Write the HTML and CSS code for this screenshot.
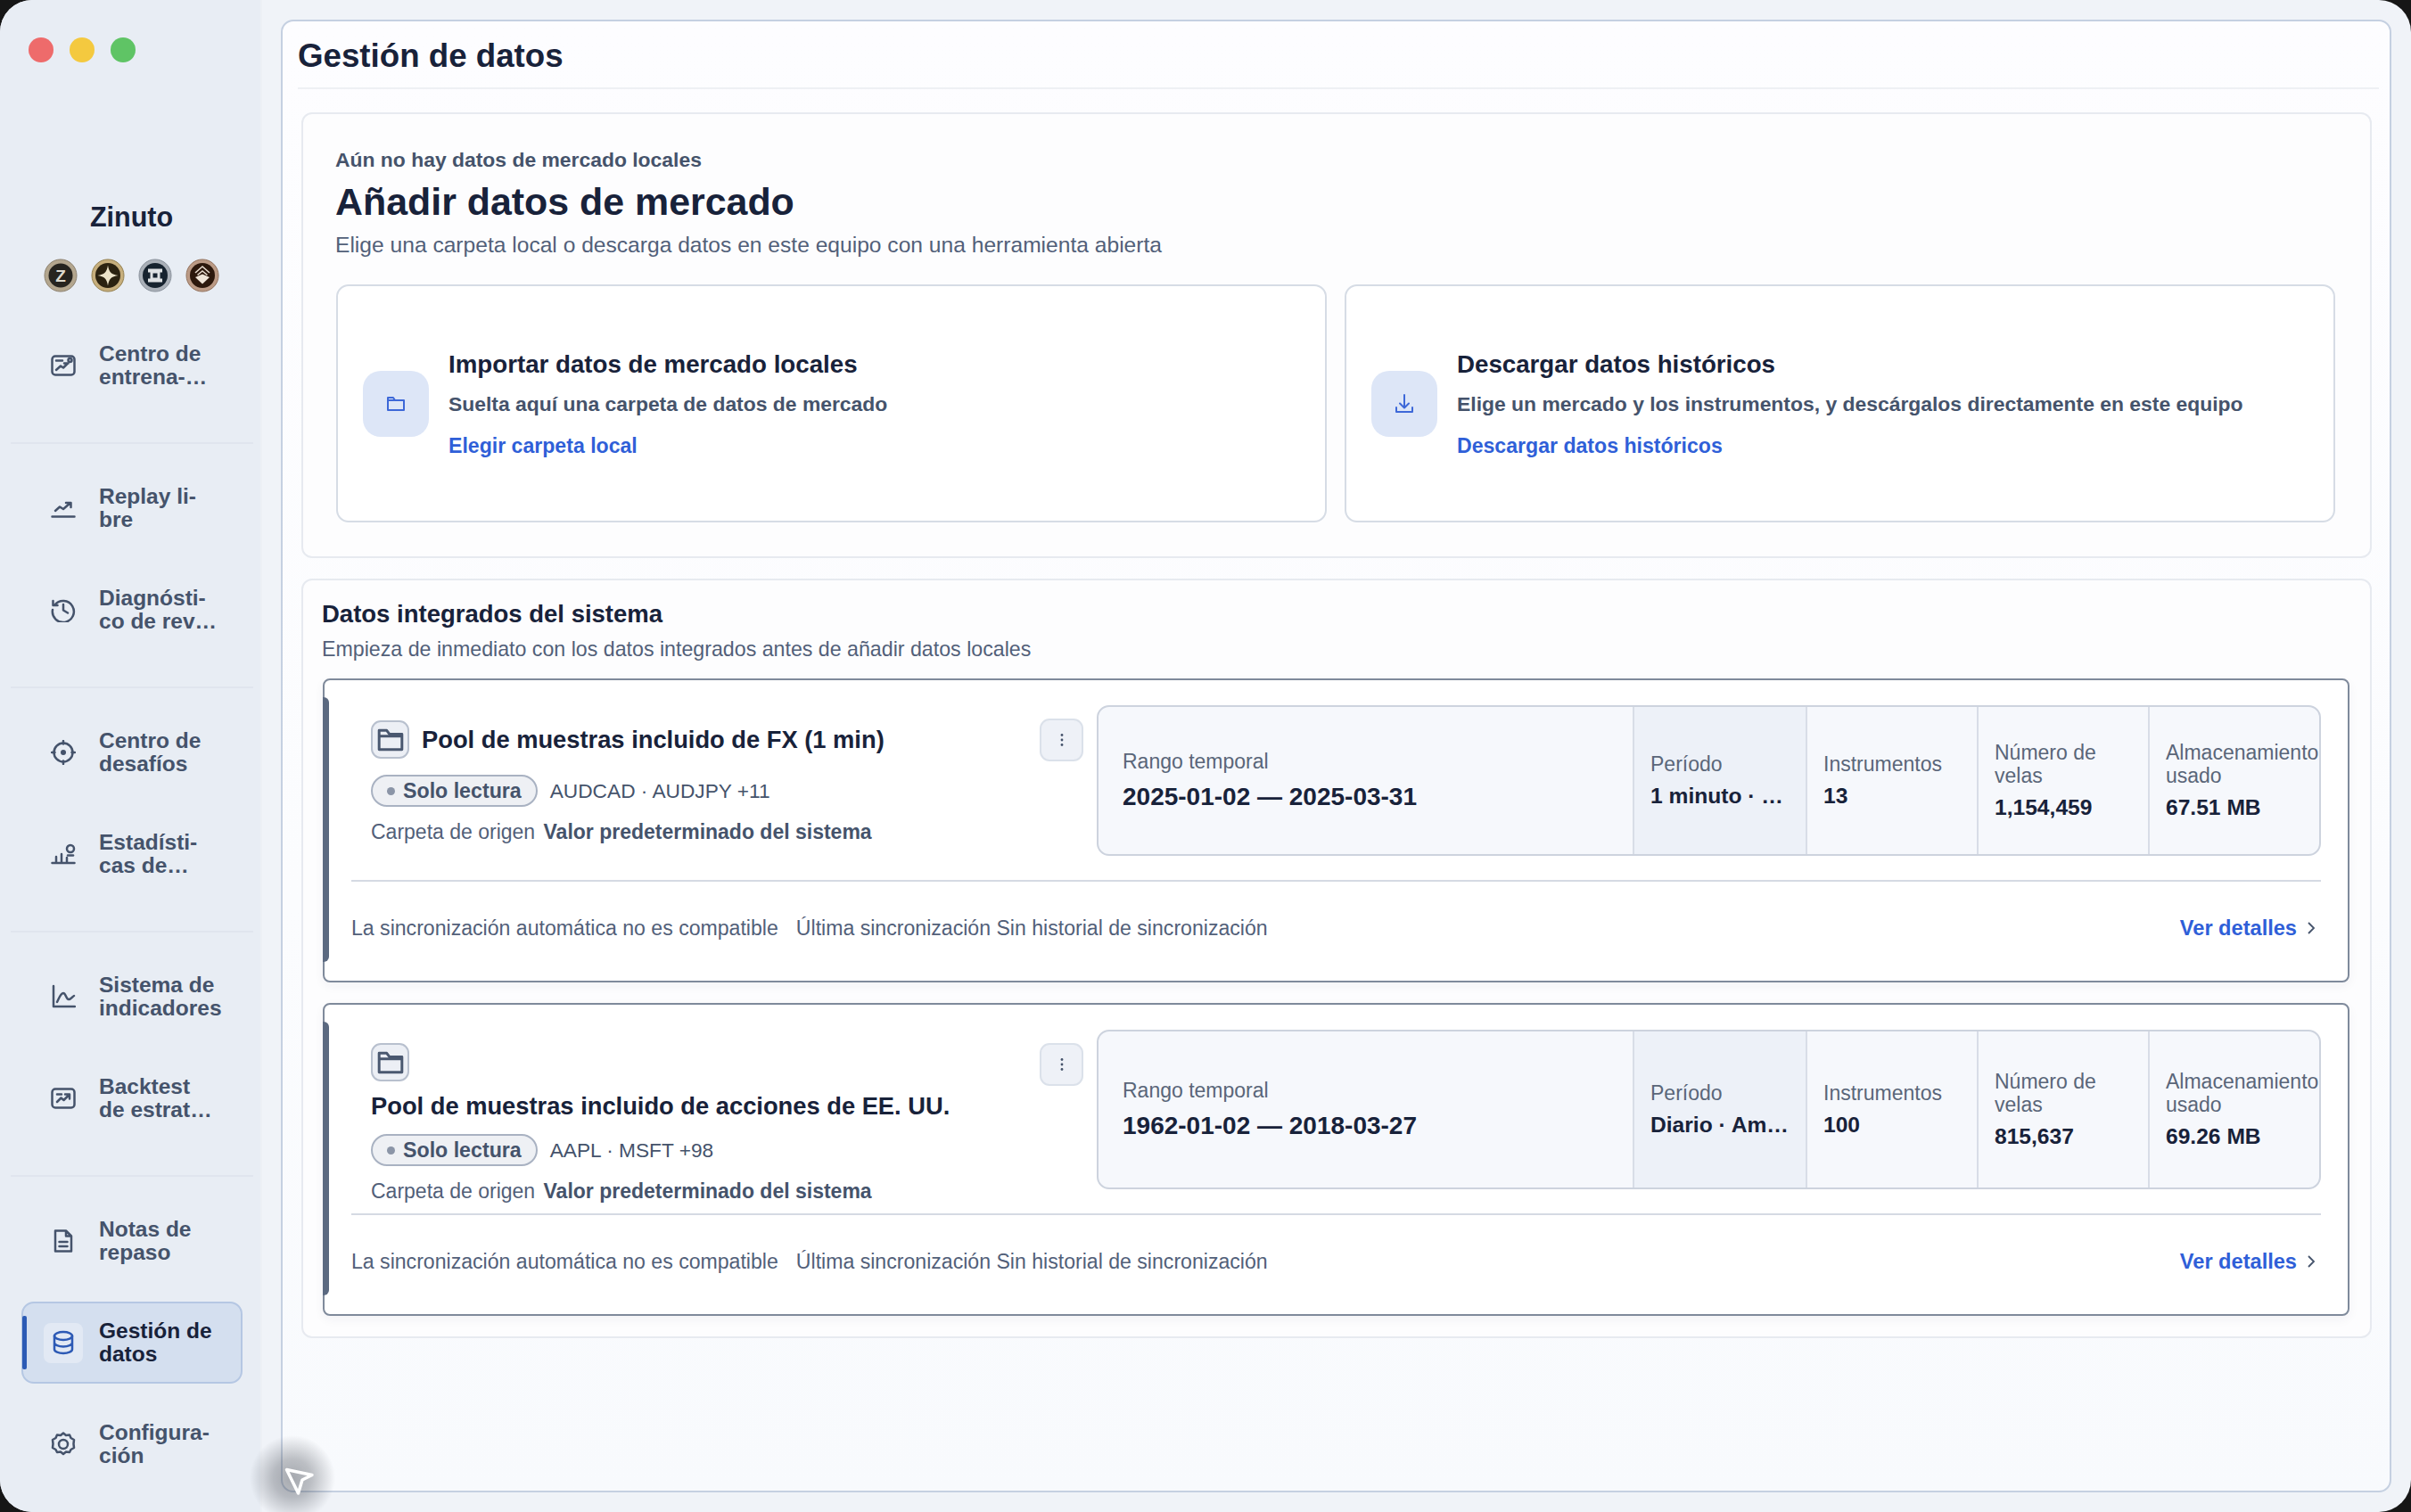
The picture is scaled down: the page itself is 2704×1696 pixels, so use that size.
FILE: index.html
```html
<!DOCTYPE html>
<html lang="es">
<head>
    <meta charset="UTF-8">
    <meta name="viewport" content="width=device-width, initial-scale=1.0">
    <title>Zinuto - Gestión de datos</title>
    <link rel="stylesheet" href="styles.css">
</head>
<body>
    <div class="window">
        <aside class="sidebar">
            <div class="traffic">
                <span class="light red"></span>
                <span class="light yellow"></span>
                <span class="light green"></span>
            </div>
            <div class="brand">Zinuto</div>
            <div class="coins">
                <svg class="coin" viewBox="0 0 38 38">
                    <circle cx="19" cy="19" r="18" fill="#b3a68e" stroke="#8d8270"/>
                    <circle cx="19" cy="19" r="13.5" fill="#26241f"/>
                    <text x="19" y="25.5" class="coin-letter">Z</text>
                </svg>
                <svg class="coin" viewBox="0 0 38 38">
                    <circle cx="19" cy="19" r="18" fill="#c6ae7c" stroke="#94804f"/>
                    <circle cx="19" cy="19" r="14" fill="#2b2210"/>
                    <path d="M19 7.5 C20 15 23 18 30.5 19 C23 20 20 23 19 30.5 C18 23 15 20 7.5 19 C15 18 18 15 19 7.5Z" fill="#ece3c9"/>
                </svg>
                <svg class="coin" viewBox="0 0 38 38">
                    <circle cx="19" cy="19" r="18" fill="#aab0b8" stroke="#8a929c"/>
                    <circle cx="19" cy="19" r="14" fill="#17232f"/>
                    <path d="M11 11.5h16v4h-2.500v7h2.500v4h-16v-4h2.500v-7h-2.500z" fill="#dfe2e4"/>
                    <rect x="16.500" y="16.500" width="5" height="5" fill="#17232f"/>
                </svg>
                <svg class="coin" viewBox="0 0 38 38">
                    <circle cx="19" cy="19" r="18" fill="#bb9a85" stroke="#94745f"/>
                    <circle cx="19" cy="19" r="14" fill="#2c180c"/>
                    <path d="M11 16 L19 9 L27 16 M13.500 18.500 L19 14 L24.500 18.500" fill="none" stroke="#e8dccf" stroke-width="1.600"/>
                    <path d="M11 21 L19 17.500 L27 21 L19 28.500z" fill="#efe5d8"/>
                </svg>
            </div>

            <div class="nav-group">
                <div class="nav-item">
                    <span class="nav-icon">
                        <svg viewBox="0 0 28 28"><rect x="1.500" y="3.500" width="25" height="21" rx="3.500"/><path d="M6 19l5-4.500 3 2 5-5M15 11.500h4.500M6 8.500h7"/><circle cx="21.500" cy="8" r="2"/></svg>
                    </span>
                    <span class="nav-label">Centro de<br>entrena-…</span>
                </div>
            </div>

            <div class="nav-group">
                <div class="nav-item">
                    <span class="nav-icon">
                        <svg viewBox="0 0 28 28"><path d="M1.500 23.500h25M5 17l5-4.500 4 2.500 8-7M17 8h5.500v5"/></svg>
                    </span>
                    <span class="nav-label">Replay li-<br>bre</span>
                </div>
                <div class="nav-item">
                    <span class="nav-icon">
                        <svg viewBox="0 0 28 28"><path d="M4.500 8.500A12 12 0 1 1 2 14M2.500 4v5h5M14 8v6.500l5 3"/></svg>
                    </span>
                    <span class="nav-label">Diagnósti-<br>co de rev…</span>
                </div>
            </div>

            <div class="nav-group">
                <div class="nav-item">
                    <span class="nav-icon">
                        <svg viewBox="0 0 28 28"><circle cx="14" cy="14" r="10.500"/><path d="M14 1v3.500M14 23.500V27M1 14h3.500M23.500 14H27"/><circle cx="14" cy="14" r="3" class="solid"/></svg>
                    </span>
                    <span class="nav-label">Centro de<br>desafíos</span>
                </div>
                <div class="nav-item">
                    <span class="nav-icon">
                        <svg viewBox="0 0 28 28"><path d="M1.500 24h25M6 24v-7M12 24v-10M18 24v-6"/><circle cx="22" cy="8" r="4"/><path d="M19 15.500h6"/></svg>
                    </span>
                    <span class="nav-label">Estadísti-<br>cas de…</span>
                </div>
            </div>

            <div class="nav-group">
                <div class="nav-item">
                    <span class="nav-icon">
                        <svg viewBox="0 0 28 28"><path d="M3 2v23h24M7 20c2-4 4-10 7-10s3 7 6 7 4-3 6-4"/></svg>
                    </span>
                    <span class="nav-label">Sistema de<br>indicadores</span>
                </div>
                <div class="nav-item">
                    <span class="nav-icon">
                        <svg viewBox="0 0 28 28"><rect x="1.500" y="3.500" width="25" height="21" rx="3.500"/><path d="M7 18l4.500-4.500 3 2.500 6-6M16 9.500h5v5M7 9.500h5"/></svg>
                    </span>
                    <span class="nav-label">Backtest<br>de estrat…</span>
                </div>
            </div>

            <div class="nav-list">
                <div class="nav-item">
                    <span class="nav-icon">
                        <svg viewBox="0 0 28 28"><path d="M5 2.500h12l6 6v17H5zM17 2.500v6h6M9.500 15h9M9.500 20h9"/></svg>
                    </span>
                    <span class="nav-label">Notas de<br>repaso</span>
                </div>
                <div class="nav-item active">
                    <span class="nav-icon">
                        <svg viewBox="0 0 28 28"><ellipse cx="14" cy="6.500" rx="10" ry="4.500"/><path d="M4 6.500v15c0 2.500 4.500 4.500 10 4.500s10-2 10-4.500v-15M4 14c0 2.500 4.500 4.500 10 4.500s10-2 10-4.500"/></svg>
                    </span>
                    <span class="nav-label">Gestión de<br>datos</span>
                </div>
                <div class="nav-item">
                    <span class="nav-icon">
                        <svg viewBox="0 0 28 28"><path d="M14 2l3 2.500 4-.500 1.500 3.500 3.500 2-.500 4.500.500 4.500-3.500 2-1.500 3-4-.500-3 2.500-3-2.500-4 .500-1.500-3-3.500-2 .500-4.500-.500-4.500 3.500-2L7 4l4 .500z" transform="translate(0 -.5)"/><circle cx="14" cy="14" r="5"/></svg>
                    </span>
                    <span class="nav-label">Configura-<br>ción</span>
                </div>
            </div>
        </aside>

        <main class="main">
            <div class="panel">
                <div class="panel-head">Gestión de datos</div>

                <section class="section add-section">
                    <div class="eyebrow">Aún no hay datos de mercado locales</div>
                    <h1 class="add-title">Añadir datos de mercado</h1>
                    <div class="sub add-sub">Elige una carpeta local o descarga datos en este equipo con una herramienta abierta</div>
                    <div class="add-grid">
                        <div class="add-card">
                            <div class="add-icon">
                                <svg viewBox="0 0 24 24"><path d="M3 19V5h6l2 3h10v11z"/><path d="M3 8h8"/></svg>
                            </div>
                            <div class="add-text">
                                <div class="add-card-title">Importar datos de mercado locales</div>
                                <div class="add-desc">Suelta aquí una carpeta de datos de mercado</div>
                                <div class="link add-link">Elegir carpeta local</div>
                            </div>
                        </div>
                        <div class="add-card">
                            <div class="add-icon">
                                <svg viewBox="0 0 24 24"><path d="M12 2v14M7 11.500l5 5 5-5M3 16v5h18v-5"/></svg>
                            </div>
                            <div class="add-text">
                                <div class="add-card-title">Descargar datos históricos</div>
                                <div class="add-desc">Elige un mercado y los instrumentos, y descárgalos directamente en este equipo</div>
                                <div class="link add-link">Descargar datos históricos</div>
                            </div>
                        </div>
                    </div>
                </section>

                <section class="section system-section">
                    <h2 class="system-title">Datos integrados del sistema</h2>
                    <div class="sub system-sub">Empieza de inmediato con los datos integrados antes de añadir datos locales</div>

                    <div class="data-card">
                        <div class="data-top">
                            <div class="source">
                                <div class="source-head">
                                    <span class="folder-box">
                                        <svg viewBox="0 0 30 30"><path d="M3 25V5h8l3 4h13v16z"/><path d="M3 11h24"/></svg>
                                    </span>
                                    <div class="source-title">Pool de muestras incluido de FX (1 min)</div>
                                </div>
                                <div class="source-tags">
                                    <span class="pill"><i class="pill-dot"></i>Solo lectura</span>
                                    <span>AUDCAD · AUDJPY +11</span>
                                </div>
                                <div class="source-origin">Carpeta de origen <strong>Valor predeterminado del sistema</strong></div>
                            </div>
                            <button class="menu-btn"><svg viewBox="0 0 4 16"><circle cx="2" cy="2.500" r="1.400"/><circle cx="2" cy="8" r="1.400"/><circle cx="2" cy="13.500" r="1.400"/></svg></button>
                            <div class="stats">
                                <div class="stat stat-range"><div class="stat-label">Rango temporal</div><div class="stat-value">2025-01-02 — 2025-03-31</div></div>
                                <div class="stat stat-period"><div class="stat-label">Período</div><div class="stat-value">1 minuto · …</div></div>
                                <div class="stat"><div class="stat-label">Instrumentos</div><div class="stat-value">13</div></div>
                                <div class="stat"><div class="stat-label">Número de velas</div><div class="stat-value">1,154,459</div></div>
                                <div class="stat"><div class="stat-label">Almacenamiento usado</div><div class="stat-value">67.51 MB</div></div>
                            </div>
                        </div>
                        <div class="data-foot">
                            <div class="sync">
                                <span>La sincronización automática no es compatible</span>
                                <span>Última sincronización Sin historial de sincronización</span>
                            </div>
                            <div class="link details">Ver detalles <svg viewBox="0 0 10 16"><path d="M2 2l6 6-6 6"/></svg></div>
                        </div>
                    </div>

                    <div class="data-card data-card-stacked">
                        <div class="data-top">
                            <div class="source">
                                <div class="source-head">
                                    <span class="folder-box">
                                        <svg viewBox="0 0 30 30"><path d="M3 25V5h8l3 4h13v16z"/><path d="M3 11h24"/></svg>
                                    </span>
                                    <div class="source-title">Pool de muestras incluido de acciones de EE. UU.</div>
                                </div>
                                <div class="source-tags">
                                    <span class="pill"><i class="pill-dot"></i>Solo lectura</span>
                                    <span>AAPL · MSFT +98</span>
                                </div>
                                <div class="source-origin">Carpeta de origen <strong>Valor predeterminado del sistema</strong></div>
                            </div>
                            <button class="menu-btn"><svg viewBox="0 0 4 16"><circle cx="2" cy="2.500" r="1.400"/><circle cx="2" cy="8" r="1.400"/><circle cx="2" cy="13.500" r="1.400"/></svg></button>
                            <div class="stats">
                                <div class="stat stat-range"><div class="stat-label">Rango temporal</div><div class="stat-value">1962-01-02 — 2018-03-27</div></div>
                                <div class="stat stat-period"><div class="stat-label">Período</div><div class="stat-value">Diario · Am…</div></div>
                                <div class="stat"><div class="stat-label">Instrumentos</div><div class="stat-value">100</div></div>
                                <div class="stat"><div class="stat-label">Número de velas</div><div class="stat-value">815,637</div></div>
                                <div class="stat"><div class="stat-label">Almacenamiento usado</div><div class="stat-value">69.26 MB</div></div>
                            </div>
                        </div>
                        <div class="data-foot">
                            <div class="sync">
                                <span>La sincronización automática no es compatible</span>
                                <span>Última sincronización Sin historial de sincronización</span>
                            </div>
                            <div class="link details">Ver detalles <svg viewBox="0 0 10 16"><path d="M2 2l6 6-6 6"/></svg></div>
                        </div>
                    </div>
                </section>
            </div>
        </main>

        <div class="cursor">
            <svg viewBox="0 0 36 34"><path d="M3.500 3.500L32 9.500 21 15 16.500 30z"/></svg>
        </div>
    </div>
</body>
</html>
```

FILE: styles.css
```css
* {
    box-sizing: border-box;
}
body {
    margin: 0;
    background-color: #161616;
    font-family: "Liberation Sans", Arial, sans-serif;
    color: #1a2338;
}
.window {
    position: relative;
    display: flex;
    width: 2704px;
    height: 1696px;
    background-color: #f0f3f8;
    border-radius: 36px;
    overflow: hidden;
}

/* sidebar */
.sidebar {
    flex: none;
    width: 294px;
    height: 100%;
    padding-top: 42px;
    background-color: #e8edf4;
    border-right: 2px solid #edf0f5;
}
.traffic {
    display: flex;
    gap: 18px;
    padding-left: 32px;
}
.light {
    width: 28px;
    height: 28px;
    border-radius: 50%;
}
.light.red { background-color: #ee6b6b; }
.light.yellow { background-color: #f4c93f; }
.light.green { background-color: #5fc465; }
.brand {
    margin-top: 155px;
    padding-left: 3px;
    text-align: center;
    font-size: 30.500px;
    line-height: 36px;
    font-weight: 700;
    color: #18223a;
}
.coins {
    display: flex;
    margin-top: 29px;
    padding-left: 49px;
    gap: 15px;
}
.coin {
    width: 38px;
    height: 38px;
}
.coin-letter {
    font-family: "Liberation Sans", Arial, sans-serif;
    font-size: 19px;
    font-weight: 700;
    text-anchor: middle;
    fill: #dcd8cc;
}
.nav-group {
    margin: 36px 8px 26px 12px;
    padding-bottom: 40px;
    border-bottom: 2px solid #e0e5ee;
}
.nav-group + .nav-group,
.nav-group + .nav-list {
    margin-top: 0;
}
.nav-list {
    margin: 0 8px 0 12px;
}
.nav-item {
    display: flex;
    align-items: center;
    gap: 18px;
    height: 92px;
    margin: 22px 12px 0;
    padding-left: 23px;
    border: 2px solid transparent;
    border-radius: 14px;
    position: relative;
}
.nav-item:first-child {
    margin-top: 0;
}
.nav-icon {
    display: flex;
    align-items: center;
    justify-content: center;
    flex: none;
    width: 44px;
    height: 45px;
    border-radius: 8px;
}
.nav-icon svg {
    width: 28px;
    height: 28px;
    fill: none;
    stroke: #45536b;
    stroke-width: 2.500;
    stroke-linejoin: round;
    stroke-linecap: round;
}
.nav-icon svg .solid {
    fill: #45536b;
    stroke: none;
}
.nav-label {
    font-size: 24.500px;
    line-height: 26px;
    font-weight: 700;
    color: #45536b;
    white-space: nowrap;
}
.nav-item.active {
    background-color: #d4dfef;
    border-color: #b5c7e3;
}
.nav-item.active::before {
    content: "";
    position: absolute;
    left: -1px;
    top: 14px;
    bottom: 14px;
    width: 5px;
    background-color: #2c5bb5;
    border-radius: 2px;
}
.nav-item.active .nav-icon {
    background-color: #e2e9f4;
}
.nav-item.active .nav-icon svg {
    stroke: #2d5ab5;
}
.nav-item.active .nav-label {
    color: #18223a;
}

/* main */
.main {
    flex: 1;
    min-width: 0;
    padding: 22px 22px 22px 21px;
}
.panel {
    height: 100%;
    padding: 0 20px 0 21px;
    background: linear-gradient(180deg, #fdfdff 0%, #fbfcfe 60%, #f8fafd 100%);
    border: 2px solid #c5d0e1;
    border-radius: 14px;
}
.panel-head {
    margin: 0 -8px 0 -4px;
    height: 76px;
    padding-top: 16px;
    font-size: 36.700px;
    line-height: 46px;
    font-weight: 700;
    color: #18223a;
    border-bottom: 2px solid #eef0f4;
}
.section {
    background-color: #fdfdfe;
    border: 2px solid #e7eaf0;
    border-radius: 12px;
}
.add-section {
    margin-top: 26px;
    padding: 37px 39px 38px 36px;
}
.eyebrow {
    font-size: 22.900px;
    line-height: 28px;
    font-weight: 700;
    color: #45536b;
}
.add-title {
    margin: 8px 0 0;
    font-size: 42.900px;
    line-height: 50px;
    font-weight: 700;
    color: #18223a;
}
.sub {
    font-size: 23.200px;
    color: #526079;
}
.add-sub {
    margin-top: 9px;
    font-size: 24.600px;
    line-height: 30px;
}
.add-grid {
    display: grid;
    grid-template-columns: 1fr 1fr;
    gap: 20px;
    margin: 29px 0 0 1px;
}
.add-card {
    display: flex;
    align-items: center;
    gap: 22px;
    height: 267px;
    padding-left: 28px;
    background-color: #fff;
    border: 2px solid #d6dce5;
    border-radius: 14px;
}
.add-icon {
    display: flex;
    align-items: center;
    justify-content: center;
    flex: none;
    width: 74px;
    height: 74px;
    background-color: #dde6f7;
    border-radius: 20px;
}
.add-icon svg {
    width: 24px;
    height: 24px;
    fill: none;
    stroke: #3d68d8;
    stroke-width: 2;
    stroke-linejoin: round;
    stroke-linecap: round;
}
.add-card-title {
    font-size: 27.700px;
    line-height: 34px;
    font-weight: 700;
    color: #18223a;
}
.add-desc {
    margin-top: 13px;
    font-size: 22.900px;
    line-height: 28px;
    font-weight: 700;
    color: #45536b;
}
.link {
    font-size: 23.100px;
    line-height: 28px;
    font-weight: 700;
    color: #2f5fd8;
}
.add-link {
    margin-top: 19px;
}
.system-section {
    margin-top: 23px;
    padding: 21px 23px 23px 21px;
}
.system-title {
    margin: 0;
    font-size: 27.500px;
    line-height: 34px;
    font-weight: 700;
    color: #18223a;
}
.system-sub {
    margin-top: 8px;
    line-height: 28px;
}
.data-card {
    position: relative;
    margin: 19px 0 0 1px;
    padding: 0 30px;
    background-color: #fff;
    border: 2px solid #7f8a9b;
    border-radius: 8px;
    box-shadow: 0 4px 12px rgba(30, 45, 70, 0.05);
}
.data-card + .data-card {
    margin-top: 23px;
}
.data-card::before {
    content: "";
    position: absolute;
    left: -2px;
    top: 19px;
    bottom: 21px;
    width: 7px;
    background-color: #5b6980;
    border-radius: 0 6px 6px 0;
}
.data-top {
    display: flex;
    align-items: stretch;
    padding: 28px 0 27px;
    border-bottom: 2px solid #d5dae3;
}
.source {
    flex: 1;
    min-width: 0;
    margin-left: 22px;
    padding: 17px 0 14px;
}
.source-head {
    display: flex;
    align-items: center;
    gap: 14px;
}
.folder-box {
    display: flex;
    align-items: center;
    justify-content: center;
    flex: none;
    width: 43px;
    height: 43px;
    background-color: #eceff5;
    border: 2px solid #b8c0ce;
    border-radius: 11px;
}
.folder-box svg {
    width: 32px;
    height: 32px;
    fill: none;
    stroke: #4a5870;
    stroke-width: 2.800;
    stroke-linejoin: round;
}
.source-title {
    font-size: 27.300px;
    line-height: 32px;
    font-weight: 700;
    color: #18223a;
    white-space: nowrap;
}
.source-tags {
    display: flex;
    align-items: center;
    gap: 14px;
    margin-top: 18px;
    font-size: 22.700px;
    color: #45536b;
}
.pill {
    display: flex;
    align-items: center;
    gap: 9px;
    height: 36px;
    padding: 0 16px 0 16px;
    background-color: #eef0f4;
    border: 2px solid #a9b2c2;
    border-radius: 18px;
    font-size: 23.200px;
    font-weight: 700;
}
.pill-dot {
    width: 9px;
    height: 9px;
    background-color: #8b95a7;
    border-radius: 50%;
}
.source-origin {
    margin-top: 15px;
    font-size: 23px;
    line-height: 26px;
    color: #526079;
}
.source-origin strong {
    margin-left: 3px;
    color: #45536b;
}
.data-card-stacked .source {
    padding: 15px 0 0;
    margin-bottom: -15px;
}
.data-card-stacked .source-head {
    flex-direction: column;
    align-items: flex-start;
    gap: 12px;
}
.data-card-stacked .source-tags {
    margin-top: 15px;
}
.menu-btn {
    display: flex;
    align-items: center;
    justify-content: center;
    flex: none;
    width: 49px;
    height: 48px;
    margin: 15px 15px 0 0;
    padding: 0;
    background-color: #eef1f7;
    border: 2px solid #dbe1ea;
    border-radius: 11px;
}
.menu-btn svg {
    width: 4px;
    height: 16px;
    fill: #45536b;
}
.stats {
    display: grid;
    grid-template-columns: 599px 194px 192px 192px 192px;
    flex: none;
    width: 1373px;
    background-color: #f6f8fc;
    border: 2px solid #cdd3de;
    border-radius: 14px;
    overflow: hidden;
}
.stat {
    display: flex;
    flex-direction: column;
    justify-content: center;
    min-width: 0;
    padding-left: 18px;
    border-left: 2px solid #d8dde7;
}
.stat-range {
    padding-left: 27px;
    border-left: 0;
}
.stat-period {
    background-color: #edf1f8;
}
.stat-label {
    font-size: 23px;
    line-height: 26px;
    color: #5a6679;
}
.stat-value {
    margin-top: 8px;
    font-size: 24.600px;
    line-height: 30px;
    font-weight: 700;
    color: #18223a;
    white-space: nowrap;
}
.stat-range .stat-value {
    margin-top: 11px;
    font-size: 28px;
    line-height: 32px;
}
.data-foot {
    display: flex;
    align-items: center;
    justify-content: space-between;
    height: 111px;
    padding-bottom: 7px;
}
.sync {
    display: flex;
    gap: 20px;
    font-size: 23.100px;
    color: #526079;
}
.details {
    display: flex;
    align-items: center;
    gap: 11px;
    margin-right: 6px;
    font-size: 23.600px;
}
.details svg {
    width: 10px;
    height: 16px;
    fill: none;
    stroke: #45536b;
    stroke-width: 1.800;
}

/* cursor with its shadow */
.cursor {
    position: absolute;
    left: 280px;
    top: 1610px;
    display: flex;
    align-items: center;
    justify-content: center;
    width: 96px;
    height: 96px;
    padding: 8px 0 0 16px;
    background: radial-gradient(closest-side, rgba(50, 55, 65, 0.42) 0%, rgba(50, 55, 65, 0.3) 45%, rgba(50, 55, 65, 0) 100%);
}
.cursor svg {
    width: 36px;
    height: 34px;
    fill: none;
    stroke: #fff;
    stroke-width: 3.500;
    stroke-linejoin: round;
}
```
